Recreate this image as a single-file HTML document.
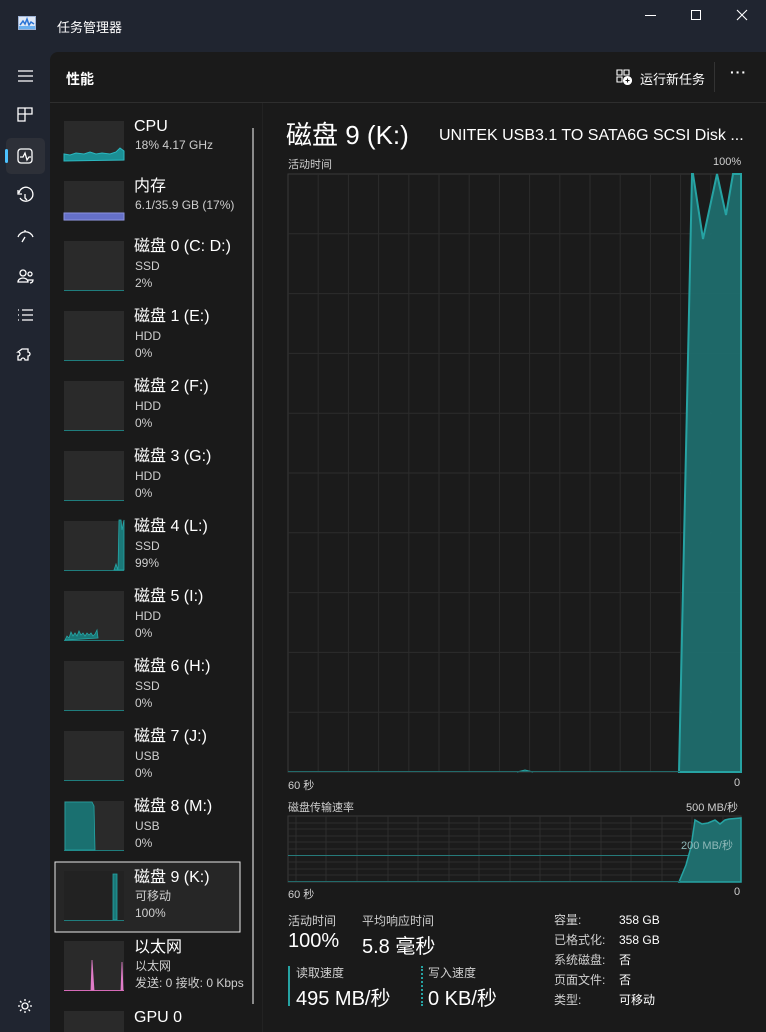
<!DOCTYPE html>
<html><head><meta charset="utf-8"><style>
*{margin:0;padding:0;box-sizing:border-box}
body{width:766px;height:1032px;background:#202530;font-family:"Liberation Sans","Noto Sans CJK SC",sans-serif;color:#fff;overflow:hidden;position:relative}
.abs{position:absolute}
.main{position:absolute;left:50px;top:52px;width:716px;height:980px;background:#1a1a1a;border-top-left-radius:8px}
.t{position:absolute;white-space:nowrap}
.item .n{font-size:16px;color:#fff;line-height:20px}
.item .s{font-size:12px;color:#cfcfcf;line-height:17px}
.lbl{font-size:11px;color:#cfcfcf}
</style></head><body>
<svg class="abs" style="left:18px;top:16px" width="18" height="14" viewBox="0 0 18 14"><rect x="0.5" y="0.5" width="17" height="13" fill="#dfe8f5" stroke="#9fb4d6"/><polyline points="2,9 5,5 7,8 9,3 11,9 13,6 16,8" fill="none" stroke="#2a74d6" stroke-width="1.5"/><rect x="1" y="10" width="16" height="3" fill="#6ab0f0"/></svg>
<div class="t" style="left:57px;top:17px;font-size:13px;color:#fff">任务管理器</div>
<div class="abs" style="left:645px;top:15px;width:11px;height:1px;background:#fff"></div>
<div class="abs" style="left:691px;top:10px;width:10px;height:10px;border:1px solid #fff"></div>
<svg class="abs" style="left:736px;top:9px" width="12" height="12"><path d="M1 1L11 11M11 1L1 11" stroke="#fff" stroke-width="1.1"/></svg>
<svg class="abs" style="left:0;top:60px" width="50" height="960" fill="none" stroke="#fff" stroke-width="1.3">
<path d="M18 11h15M18 16h15M18 21h15"/>
<path d="M18 48h14v6h-7v7h-7zM25 48v6M18 54h7"/>
<rect x="6" y="78" width="39" height="36" rx="5" fill="#2d3038" stroke="none"/>
<rect x="5" y="89" width="3" height="14" rx="1.5" fill="#4cc2ff" stroke="none"/>
<rect x="18" y="89" width="14" height="14" rx="3"/><path d="M20 97h3l2-4 2 7 2-3h2"/>
<path d="M19 133a7 7 0 1 1 1 5M18 130v4h4M25 134v4l2 2"/>
<path d="M18 177a8 8 0 0 1 15 0M25 172v-2M25 177l-3 5"/>
<circle cx="23" cy="213" r="3"/><circle cx="30" cy="214" r="2"/><path d="M18 222a5 4 0 0 1 10 0zM28 220h5a3 3 0 0 1-3 3"/>
<path d="M18 250h1M18 255h1M18 260h1M22 250h11M22 255h11M22 260h11"/>
<path d="M22 289h6v3a2 2 0 0 1 0 4v4h-3a2 2 0 0 0-4 0h-3v-4a2 2 0 0 0 0-4z"/>
<circle cx="25" cy="946" r="3"/><path d="M25 939v2M25 951v2M18 946h2M30 946h2M20 941l1.5 1.5M28.5 949.5l1.5 1.5M30 941l-1.5 1.5M21.5 949.5l-1.5 1.5"/>
</svg>
<div class="main"></div>
<div class="t" style="left:66px;top:69px;font-size:14px;font-weight:bold">性能</div>
<svg class="abs" style="left:616px;top:69px" width="16" height="16" fill="none" stroke="#fff" stroke-width="1.1"><path d="M1 1h5v5H1zM8 1h5v5H8zM1 8h5v5H1z"/><circle cx="11.5" cy="11.5" r="4" fill="#fff"/><path d="M11.5 9.5v4M9.5 11.5h4" stroke="#1a1a1a"/></svg>
<div class="t" style="left:640px;top:69px;font-size:13px">运行新任务</div>
<div class="abs" style="left:714px;top:62px;width:1px;height:30px;background:#333"></div>
<div class="t" style="left:730px;top:64px;font-size:14px;font-weight:bold;letter-spacing:1px">···</div>
<div class="abs" style="left:50px;top:102px;width:716px;height:1px;background:#2e2e2e"></div>
<div class="abs" style="left:252px;top:128px;width:2px;height:876px;background:#8a8a8a"></div>
<div class="abs" style="left:262px;top:103px;width:1px;height:929px;background:#222"></div>
<svg class="abs" style="left:0;top:0" width="260" height="1032">
<rect x="64" y="121" width="60" height="40" fill="#2a2a2a"/>
<path d="M64 161V154l6 1 6-2 8 1 6-2 6 2 6-1 8 1 6-2 4-4 4 3v9z" fill="#1b8f95" stroke="#2bb8c0"/>
<rect x="64" y="181" width="60" height="40" fill="#2a2a2a"/>
<rect x="64" y="213" width="60" height="7" fill="#6570c8" stroke="#8a92e0"/>
<g fill="#2a2a2a"><rect x="64" y="241" width="60" height="50"/><rect x="64" y="311" width="60" height="50"/><rect x="64" y="381" width="60" height="50"/><rect x="64" y="451" width="60" height="50"/><rect x="64" y="521" width="60" height="50"/><rect x="64" y="591" width="60" height="50"/><rect x="64" y="661" width="60" height="50"/><rect x="64" y="731" width="60" height="50"/><rect x="64" y="801" width="60" height="50"/><rect x="64" y="871" width="60" height="50"/><rect x="64" y="941" width="60" height="50"/><rect x="64" y="1011" width="60" height="30"/></g>
<g stroke="#1f7d7d" stroke-width="1"><path d="M64 290.5h60M64 360.5h60M64 430.5h60M64 500.5h60M64 570.5h60M64 640.5h60M64 710.5h60M64 780.5h60M64 850.5h60M64 920.5h60"/></g>
<path d="M114 570l2-6 2 6 1-50 2 0 1 10 2-10v50z" fill="#1a7878" stroke="#25a6a6" stroke-width="0.8"/>
<path d="M65 640l2-4 2 2 2-6 2 4 2-3 2 3 2-5 2 4 2-2 2 3 2-3 2 2 2-2 2 3 2-2 2-4 1 8z" fill="#1a7878" stroke="#25a6a6" stroke-width="0.8"/>
<path d="M65 850V802h27l2 4 1 44z" fill="#1a7070" stroke="#25a6a6" stroke-width="0.8"/>
<rect x="55" y="862" width="185" height="70" fill="#262626" stroke="#e8e8e8"/>
<rect x="64" y="871" width="60" height="50" fill="#222"/>
<path d="M113 920V874h4v46z" fill="#1a7878" stroke="#25a6a6" stroke-width="0.8"/>
<path d="M64 920.5h60" stroke="#1f7d7d"/>
<path d="M64 990.5h60" stroke="#d56ab7"/>
<path d="M91 990l1-30 1 15 1 15zM121 990l1-28 1 28z" fill="#e07cc8" stroke="#e07cc8" stroke-width="0.8"/>
</svg>
<div class="item">
<div class="t n" style="left:134px;top:117px">CPU</div><div class="t s" style="left:135px;top:137px">18% 4.17 GHz</div>
<div class="t n" style="left:134px;top:177px">内存</div><div class="t s" style="left:135px;top:197px">6.1/35.9 GB (17%)</div>
<div class="t n" style="left:134px;top:237px">磁盘 0 (C: D:)</div><div class="t s" style="left:135px;top:258px">SSD<br>2%</div>
<div class="t n" style="left:134px;top:307px">磁盘 1 (E:)</div><div class="t s" style="left:135px;top:328px">HDD<br>0%</div>
<div class="t n" style="left:134px;top:377px">磁盘 2 (F:)</div><div class="t s" style="left:135px;top:398px">HDD<br>0%</div>
<div class="t n" style="left:134px;top:447px">磁盘 3 (G:)</div><div class="t s" style="left:135px;top:468px">HDD<br>0%</div>
<div class="t n" style="left:134px;top:517px">磁盘 4 (L:)</div><div class="t s" style="left:135px;top:538px">SSD<br>99%</div>
<div class="t n" style="left:134px;top:587px">磁盘 5 (I:)</div><div class="t s" style="left:135px;top:608px">HDD<br>0%</div>
<div class="t n" style="left:134px;top:657px">磁盘 6 (H:)</div><div class="t s" style="left:135px;top:678px">SSD<br>0%</div>
<div class="t n" style="left:134px;top:727px">磁盘 7 (J:)</div><div class="t s" style="left:135px;top:748px">USB<br>0%</div>
<div class="t n" style="left:134px;top:797px">磁盘 8 (M:)</div><div class="t s" style="left:135px;top:818px">USB<br>0%</div>
<div class="t n" style="left:134px;top:868px">磁盘 9 (K:)</div><div class="t s" style="left:135px;top:888px">可移动<br>100%</div>
<div class="t n" style="left:134px;top:938px">以太网</div><div class="t s" style="left:135px;top:958px;width:110px;overflow:hidden">以太网<br>发送: 0 接收: 0 Kbps</div>
<div class="t n" style="left:134px;top:1008px">GPU 0</div>
</div>
<div class="t" style="left:286px;top:115px;font-size:26px">磁盘 9 (K:)</div>
<div class="t" style="left:439px;top:127px;font-size:16px;width:304px;overflow:hidden">UNITEK USB3.1 TO SATA6G SCSI Disk ...</div>
<div class="t lbl" style="left:288px;top:156px">活动时间</div>
<div class="t lbl" style="left:713px;top:156px">100%</div>
<svg class="abs" style="left:287px;top:173px" width="456" height="601">
<rect x="1" y="1" width="453" height="598" fill="#1b1b1b" stroke="#3a3a3a"/>
<g stroke="#2c2c2c"><path d="M31.2 1v598M61.4 1v598M91.6 1v598M121.8 1v598M152 1v598M182.2 1v598M212.4 1v598M242.6 1v598M272.8 1v598M303 1v598M333.2 1v598M363.4 1v598M393.6 1v598M423.8 1v598M1 60.8h453M1 120.6h453M1 180.4h453M1 240.2h453M1 300h453M1 359.8h453M1 419.6h453M1 479.4h453M1 539.2h453"/></g>
<path d="M392 599L405 1h1L416 66L430 1L439 42L446 1H454V599z" fill="#1f6d6d" fill-opacity="0.95" stroke="#26a3a3" stroke-width="2"/>
<path d="M230 599l8-2 8 2" fill="#1f6d6d" stroke="#26a3a3"/>
<path d="M1 598.5h392" stroke="#226a6a"/>
</svg>
<div class="t lbl" style="left:288px;top:777px">60 秒</div>
<div class="t lbl" style="left:734px;top:777px">0</div>
<div class="t lbl" style="left:288px;top:799px">磁盘传输速率</div>
<div class="t lbl" style="left:686px;top:799px">500 MB/秒</div>
<svg class="abs" style="left:287px;top:815px" width="456" height="68">
<rect x="1" y="1" width="453" height="66" fill="#1b1b1b" stroke="#3a3a3a"/>
<g stroke="#2e2e2e"><path d="M9 1v66M39 1v66M70 1v66M101 1v66M131 1v66M162 1v66M192 1v66M223 1v66M253 1v66M283 1v66M314 1v66M344 1v66M375 1v66M405 1v66M436 1v66M1 8h453M1 14h453M1 21h453M1 27h453M1 34h453M1 47h453M1 54h453M1 60h453"/></g>
<path d="M1 40.5h453" stroke="#267a7a"/>
<path d="M392 67L399 50L404 32L408 5L415 9L421 8L428 5L433 9L438 5L442 4L454 3V67z" fill="#1f6d6d" stroke="#26a3a3" stroke-width="1.5"/>
<path d="M1 66.5h392" stroke="#226a6a"/>
</svg>
<div class="t lbl" style="left:681px;top:837px;color:#8fb8b8">200 MB/秒</div>
<div class="t lbl" style="left:288px;top:886px">60 秒</div>
<div class="t lbl" style="left:734px;top:886px">0</div>
<div class="t" style="left:288px;top:912px;font-size:12px;color:#cfcfcf">活动时间</div>
<div class="t" style="left:362px;top:912px;font-size:12px;color:#cfcfcf">平均响应时间</div>
<div class="t" style="left:288px;top:930px;font-size:20px">100%</div>
<div class="t" style="left:362px;top:930px;font-size:20px">5.8 毫秒</div>
<div class="abs" style="left:288px;top:966px;width:2px;height:40px;background:#26a3a3"></div>
<div class="abs" style="left:421px;top:966px;width:0;height:40px;border-left:2px dotted #26a3a3"></div>
<div class="t" style="left:296px;top:964px;font-size:12px;color:#cfcfcf">读取速度</div>
<div class="t" style="left:428px;top:964px;font-size:12px;color:#cfcfcf">写入速度</div>
<div class="t" style="left:296px;top:982px;font-size:20px">495 MB/秒</div>
<div class="t" style="left:428px;top:982px;font-size:20px">0 KB/秒</div>
<div class="t" style="left:554px;top:910px;font-size:12px;color:#cfcfcf;line-height:20px">容量:<br>已格式化:<br>系统磁盘:<br>页面文件:<br>类型:</div>
<div class="t" style="left:619px;top:910px;font-size:12px;color:#fff;line-height:20px">358 GB<br>358 GB<br>否<br>否<br>可移动</div>
</body></html>
